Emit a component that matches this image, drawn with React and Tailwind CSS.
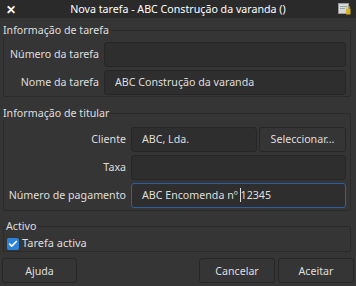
import { Check } from "lucide-react";

function Field({ value, focused, className = "" }) {
  return (
    <div
      className={`h-[25px] flex items-center px-[10px] rounded-[3px] bg-[#2e2e2e] border whitespace-nowrap ${
        focused ? "border-[#2f5f9e]" : "border-[#262626]"
      } ${className}`}
    >
      {value}
    </div>
  );
}

function Row({ label, labelWidth, children }) {
  return (
    <div className="flex items-center h-[28px]">
      <div className={`${labelWidth} text-right pr-[5px] shrink-0 whitespace-nowrap`}>{label}</div>
      <div className="flex-1 flex gap-[2px]">{children}</div>
    </div>
  );
}

function Group({ title, children, className = "" }) {
  return (
    <fieldset className={`border border-[#2a2a2a] rounded-[2px] ${className}`}>
      <legend className="leading-[14px] -ml-[1px]">{title}</legend>
      {children}
    </fieldset>
  );
}

function Button({ children, className = "" }) {
  return (
    <div
      className={`h-[25px] flex items-center justify-center rounded-[3px] bg-[#353535] border border-[#262626] whitespace-nowrap ${className}`}
    >
      {children}
    </div>
  );
}

export default function App() {
  return (
    <div
      className="w-[356px] h-[286px] bg-[#353535] text-[#dedede] text-[10.67px] flex flex-col overflow-hidden"
      style={{ fontFamily: '"Noto Sans", "Open Sans", sans-serif' }}
    >
      <div className="h-[18px] bg-[#2a2a2a] flex items-center relative shrink-0">
        <span className="absolute left-[6px] top-[1px] text-[12px] font-bold text-white">✕</span>
        <div className="flex-1 text-center leading-[18px] text-white">
          Nova tarefa - ABC Construção da varanda ()
        </div>
        <svg className="absolute right-[5px] top-[2px]" width="13" height="13" viewBox="0 0 13 13">
          <rect x="0.5" y="1.5" width="10" height="10" fill="#d8d8d8" stroke="#9a9a9a" />
          <rect x="2" y="4" width="7" height="1" fill="#8aa" />
          <rect x="2" y="6" width="5" height="1" fill="#8aa" />
          <rect x="8" y="7" width="4.5" height="5.5" rx="0.5" fill="#d6b324" />
          <path d="M8.8 7 V5.6 a1.45 1.45 0 0 1 2.9 0 V7" fill="none" stroke="#d6b324" strokeWidth="0.9" />
        </svg>
      </div>

      <div className="flex flex-col px-[3px] pr-[5px]">
        <Group title="Informação de tarefa" className="mt-[5px] pt-[3px] pb-[2px] pr-[4px] h-[74px]">
          <Row label="Número da tarefa" labelWidth="w-[100px]">
            <Field value="" className="flex-1" />
          </Row>
          <Row label="Nome da tarefa" labelWidth="w-[100px]">
            <Field value="ABC Construção da varanda" className="flex-1" />
          </Row>
        </Group>

        <Group title="Informação de titular" className="mt-[9px] pt-[5px] pb-[3px] pr-[4px] h-[105px]">
          <Row label="Cliente" labelWidth="w-[127px]">
            <Field value="ABC, Lda." className="w-[126px]" />
            <Button className="flex-1">Seleccionar...</Button>
          </Row>
          <Row label="Taxa" labelWidth="w-[127px]">
            <Field value="" className="flex-1" />
          </Row>
          <Row label="Número de pagamento" labelWidth="w-[127px]">
            <Field
              focused
              value={
                <span>
                  ABC Encomenda nº <span className="border-l border-[#dedede] -ml-[1px]" />12345
                </span>
              }
              className="flex-1"
            />
          </Row>
        </Group>

        <Group title="Activo" className="mt-[8px] h-[33px] pl-[3px]">
          <div className="flex items-center gap-[3px] h-[19px] pt-[2px]">
            <div className="w-[12px] h-[12px] rounded-[2px] bg-[#2a82da] flex items-center justify-center">
              <Check className="w-[10px] h-[10px] text-white" strokeWidth={4} />
            </div>
            <span className="text-[11px]">Tarefa activa</span>
          </div>
        </Group>
      </div>

      <div className="flex items-center px-[2px] mt-[6px]">
        <Button className="w-[75px]">Ajuda</Button>
        <div className="flex-1" />
        <Button className="w-[76px]">Cancelar</Button>
        <Button className="w-[76px] ml-[3px]">Aceitar</Button>
      </div>
    </div>
  );
}
